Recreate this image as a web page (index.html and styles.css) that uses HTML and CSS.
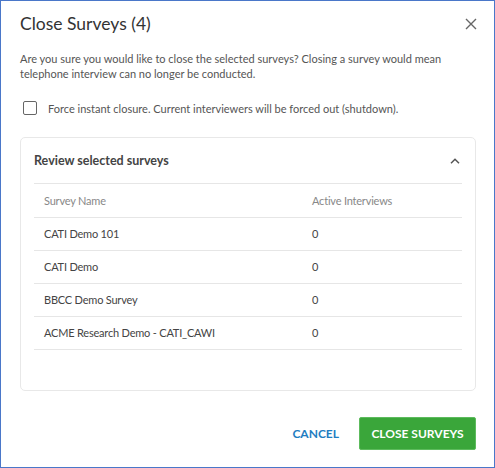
FILE: index.html
```html
<!DOCTYPE html>
<html lang="en">
<head>
  <meta charset="UTF-8">
  <title>Close Surveys</title>
  <link rel="stylesheet" href="styles.css">
</head>
<body>
  <div class="dialog">
    <div class="dialog-header">
      <h1>Close Surveys (4)</h1>
      <button class="icon-btn close-btn" aria-label="Close">
        <svg width="12" height="12" viewBox="0 0 12 12"><path d="M1 1 L11 11 M11 1 L1 11" stroke="#666" stroke-width="1.4" fill="none"/></svg>
      </button>
    </div>

    <p class="intro">Are you sure you would like to close the selected surveys? Closing a survey would mean telephone interview can no longer be conducted.</p>

    <label class="check-row">
      <span class="checkbox"></span>
      <span>Force instant closure. Current interviewers will be forced out (shutdown).</span>
    </label>

    <div class="card">
      <div class="card-header">
        <span class="card-title">Review selected surveys</span>
        <svg width="10" height="6" viewBox="0 0 10 6"><path d="M1 5.2 L5 1.2 L9 5.2" stroke="#555" stroke-width="1.5" fill="none"/></svg>
      </div>
      <table class="surveys">
        <thead>
          <tr><th>Survey Name</th><th>Active Interviews</th></tr>
        </thead>
        <tbody>
          <tr><td>CATI Demo 101</td><td>0</td></tr>
          <tr><td>CATI Demo</td><td>0</td></tr>
          <tr><td>BBCC Demo Survey</td><td>0</td></tr>
          <tr><td>ACME Research Demo - CATI_CAWI</td><td>0</td></tr>
        </tbody>
      </table>
    </div>

    <div class="actions">
      <button class="btn-text">CANCEL</button>
      <button class="btn-primary">CLOSE SURVEYS</button>
    </div>
  </div>
</body>
</html>
```

FILE: styles.css
```css
* {
  box-sizing: border-box;
}

html, body {
  margin: 0;
  padding: 0;
  height: 100%;
}

body {
  font-family: Lato, "Liberation Sans", sans-serif;
  color: #333;
  background: #fff;
}

.dialog {
  height: 468px;
  border: 1px solid #4a77c9;
  padding: 0 17px 0 19px;
  display: flex;
  flex-direction: column;
}

.dialog-header {
  display: flex;
  align-items: center;
  justify-content: space-between;
  height: 44px;
  padding-top: 1px;
}

h1 {
  margin: 0;
  font-size: 17.5px;
  font-weight: 400;
  color: #333;
}

.icon-btn {
  border: none;
  background: none;
  padding: 0;
  display: flex;
  cursor: pointer;
}

.intro {
  margin: 6px 0 0 0;
  font-size: 11px;
  line-height: 15px;
  color: #555;
}

.check-row {
  display: flex;
  align-items: center;
  gap: 11px;
  margin: 20px 0 0 3px;
  font-size: 11px;
  color: #555;
}

.checkbox {
  width: 14px;
  height: 14px;
  border: 1.5px solid #666;
  border-radius: 2px;
}

.card {
  margin-top: 22px;
  margin-right: 1px;
  height: 254px;
  border: 1px solid #e8e8e8;
  border-radius: 5px;
  padding: 0 13px;
}

.card-header {
  display: flex;
  align-items: center;
  justify-content: space-between;
  height: 46px;
  padding-right: 2px;
  border-bottom: 1px solid #e6e6e6;
}

.card-title {
  font-size: 12.5px;
  font-weight: 700;
  color: #444;
}

.surveys {
  width: 100%;
  border-collapse: collapse;
  font-size: 11px;
  letter-spacing: -0.2px;
}

.surveys th,
.surveys td {
  text-align: left;
  padding: 0 0 0 10px;
  height: 33px;
  border-bottom: 1px solid #e6e6e6;
}

.surveys th {
  font-weight: 400;
  color: #888;
}

.surveys td {
  color: #444;
}

.surveys th:first-child {
  width: 268px;
}

.actions {
  display: flex;
  justify-content: flex-end;
  align-items: center;
  gap: 20px;
  margin-top: 26px;
  margin-right: 1px;
}

.btn-text {
  border: none;
  background: none;
  color: #1f7dc1;
  font-family: inherit;
  font-weight: 700;
  font-size: 12px;
  padding: 0;
  cursor: pointer;
}

.btn-primary {
  border: 1px solid #5dbb5d;
  background: #3aa63a;
  color: #fff;
  font-family: inherit;
  font-weight: 700;
  font-size: 12px;
  width: 117px;
  height: 33px;
  border-radius: 2px;
  cursor: pointer;
}
```
